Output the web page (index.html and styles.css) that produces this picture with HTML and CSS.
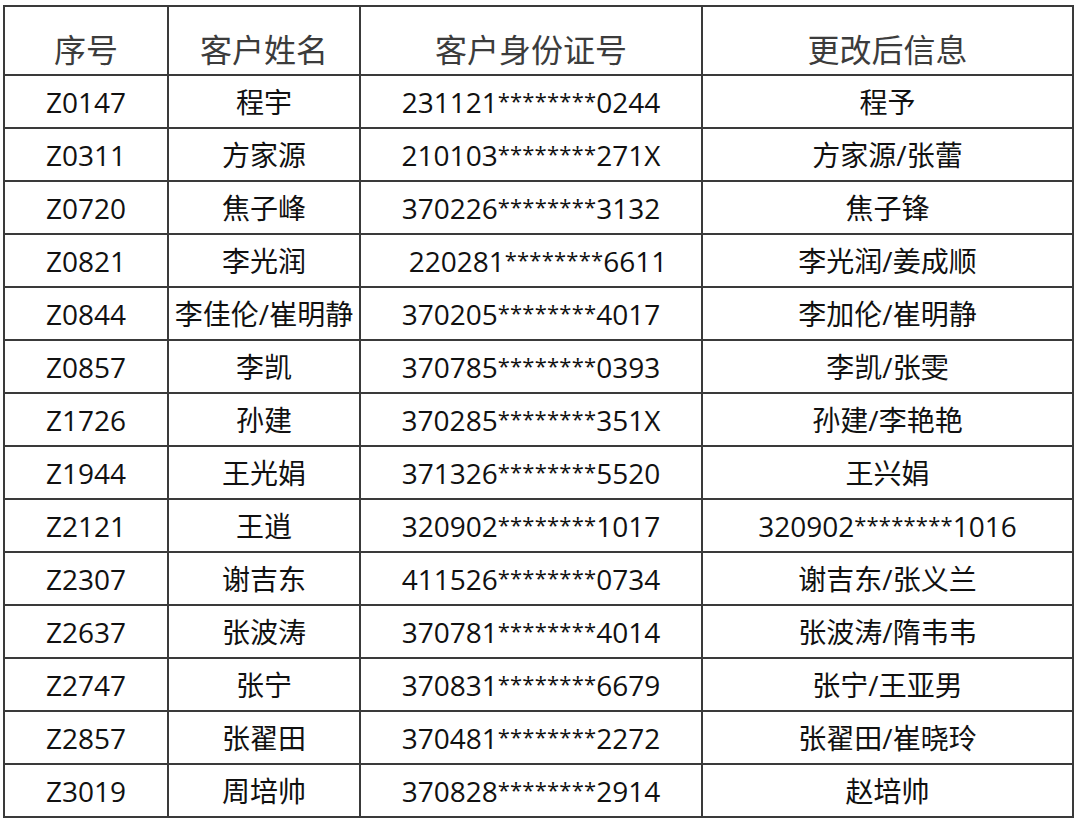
FILE: index.html
```html
<!DOCTYPE html>
<html lang="zh-CN">
<head>
<meta charset="utf-8">
<title>客户信息更改</title>
<link rel="stylesheet" href="styles.css">
</head>
<body>
<table class="sheet">
  <colgroup>
    <col class="c1"><col class="c2"><col class="c3"><col class="c4">
  </colgroup>
  <thead>
    <tr><th>序号</th><th>客户姓名</th><th>客户身份证号</th><th>更改后信息</th></tr>
  </thead>
  <tbody>
    <tr><td>Z0147</td><td>程宇</td><td>231121<span class="mask">********</span>0244</td><td>程予</td></tr>
    <tr><td>Z0311</td><td>方家源</td><td>210103<span class="mask">********</span>271X</td><td>方家源/张蕾</td></tr>
    <tr><td>Z0720</td><td>焦子峰</td><td>370226<span class="mask">********</span>3132</td><td>焦子锋</td></tr>
    <tr><td>Z0821</td><td>李光润</td><td class="indent">220281<span class="mask">********</span>6611</td><td>李光润/姜成顺</td></tr>
    <tr><td>Z0844</td><td>李佳伦/崔明静</td><td>370205<span class="mask">********</span>4017</td><td>李加伦/崔明静</td></tr>
    <tr><td>Z0857</td><td>李凯</td><td>370785<span class="mask">********</span>0393</td><td>李凯/张雯</td></tr>
    <tr><td>Z1726</td><td>孙建</td><td>370285<span class="mask">********</span>351X</td><td>孙建/李艳艳</td></tr>
    <tr><td>Z1944</td><td>王光娟</td><td>371326<span class="mask">********</span>5520</td><td>王兴娟</td></tr>
    <tr><td>Z2121</td><td>王逍</td><td>320902<span class="mask">********</span>1017</td><td>320902<span class="mask">********</span>1016</td></tr>
    <tr><td>Z2307</td><td>谢吉东</td><td>411526<span class="mask">********</span>0734</td><td>谢吉东/张义兰</td></tr>
    <tr><td>Z2637</td><td>张波涛</td><td>370781<span class="mask">********</span>4014</td><td>张波涛/隋韦韦</td></tr>
    <tr><td>Z2747</td><td>张宁</td><td>370831<span class="mask">********</span>6679</td><td>张宁/王亚男</td></tr>
    <tr><td>Z2857</td><td>张翟田</td><td>370481<span class="mask">********</span>2272</td><td>张翟田/崔晓玲</td></tr>
    <tr><td>Z3019</td><td>周培帅</td><td>370828<span class="mask">********</span>2914</td><td>赵培帅</td></tr>
  </tbody>
</table>
</body>
</html>
```

FILE: styles.css
```css
html, body {
  margin: 0;
  padding: 0;
  background: #ffffff;
}
body {
  padding: 5px 0 0 3px;
}
.sheet {
  border-collapse: collapse;
  table-layout: fixed;
  width: 1069px;
  font-family: "Open Sans", "Noto Sans CJK SC", sans-serif;
  color: #111;
}
.c1 { width: 164px; }
.c2 { width: 192px; }
.c3 { width: 342px; }
.c4 { width: 371px; }
.sheet th,
.sheet td {
  border: 2px solid #3a3a3a;
  text-align: center;
  padding: 0;
  white-space: nowrap;
}
.sheet th {
  height: 69px;
  font-size: 32px;
  font-weight: 400;
  color: #3c3c3c;
  vertical-align: bottom;
  padding-bottom: 5px;
  box-sizing: border-box;
  line-height: 1.2;
}
.sheet td {
  height: 53px;
  font-size: 28px;
  line-height: 1;
  vertical-align: middle;
  box-sizing: border-box;
}
.sheet td.indent {
  padding-left: 14px;
}
.mask {
  font-size: 22px;
  letter-spacing: 0.2px;
  vertical-align: 4px;
}
```
